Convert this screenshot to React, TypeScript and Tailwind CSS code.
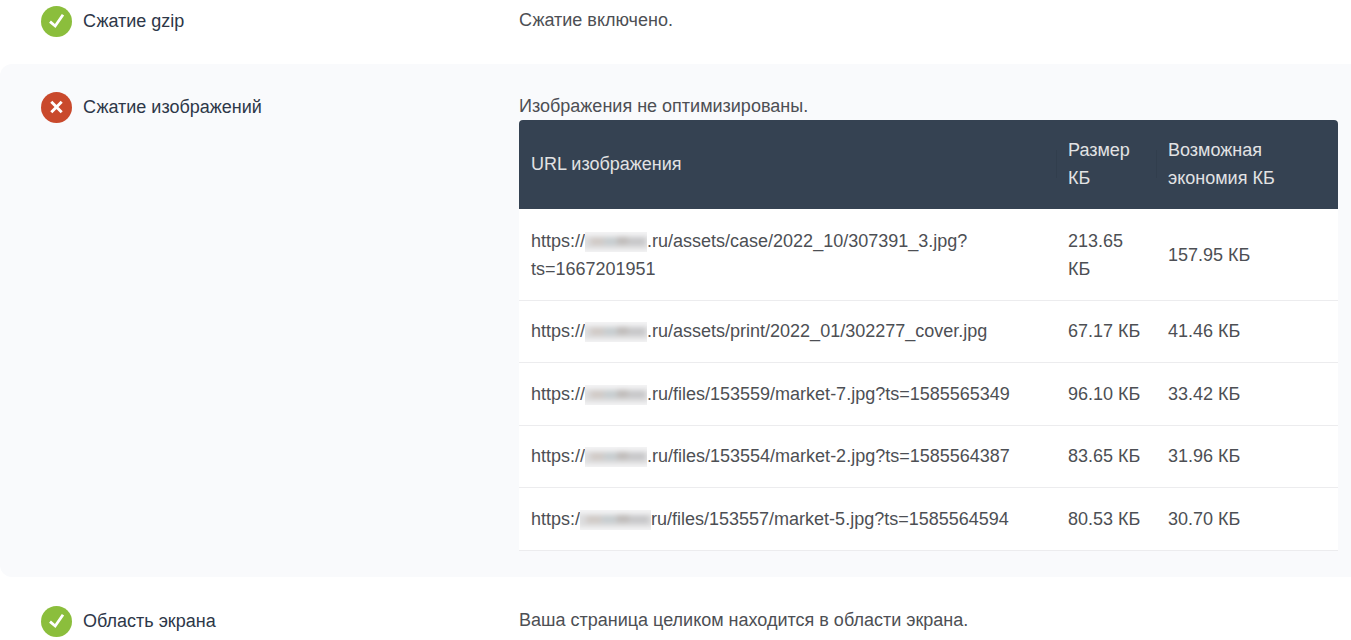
import type { ReactNode } from "react";

const images = [
  {
    scheme: "https://",
    mask: "w-[62px]",
    path: ".ru/assets/case/2022_10/307391_3.jpg?ts=1667201951",
    size: "213.65 КБ",
    saving: "157.95 КБ",
  },
  {
    scheme: "https://",
    mask: "w-[62px]",
    path: ".ru/assets/print/2022_01/302277_cover.jpg",
    size: "67.17 КБ",
    saving: "41.46 КБ",
  },
  {
    scheme: "https://",
    mask: "w-[62px]",
    path: ".ru/files/153559/market-7.jpg?ts=1585565349",
    size: "96.10 КБ",
    saving: "33.42 КБ",
  },
  {
    scheme: "https://",
    mask: "w-[62px]",
    path: ".ru/files/153554/market-2.jpg?ts=1585564387",
    size: "83.65 КБ",
    saving: "31.96 КБ",
  },
  {
    scheme: "https:/",
    mask: "w-[71px]",
    path: "ru/files/153557/market-5.jpg?ts=1585564594",
    size: "80.53 КБ",
    saving: "30.70 КБ",
  },
];

function StatusIcon({ ok }: { ok: boolean }) {
  return (
    <svg viewBox="0 0 31 31" className="size-[31px] shrink-0" aria-hidden="true">
      <circle cx="15.5" cy="15.5" r="15.5" fill={ok ? "#8bbe3c" : "#c9492c"} />
      <path
        d={ok ? "M9 15.6 L14.2 20 L22 8.8" : "M10.3 9.8 L20.7 20.2 M20.7 9.8 L10.3 20.2"}
        fill="none"
        stroke="#fff"
        strokeWidth={ok ? 2.8 : 2.9}
      />
    </svg>
  );
}

// Blurred host name inside a URL
function HiddenHost({ width }: { width: string }) {
  return (
    <svg
      viewBox="0 0 66 20"
      preserveAspectRatio="none"
      className={`inline-block h-5 ${width}`}
      aria-hidden="true"
    >
      <defs>
        <filter id="soften" x="-10%" y="-40%" width="120%" height="180%">
          <feGaussianBlur stdDeviation="2.6" />
        </filter>
      </defs>
      <rect width="66" height="20" fill="#f4f4f5" />
      <g filter="url(#soften)">
        <rect x="-2" y="4" width="70" height="13" fill="#dcdcdd" />
        <rect x="6" y="6" width="14" height="7" fill="#d0c9c5" />
        <rect x="20" y="6" width="14" height="7" fill="#c6cccf" />
        <rect x="34" y="5" width="12" height="8" fill="#c0bcba" />
        <rect x="46" y="6" width="18" height="7" fill="#c6c6c8" />
      </g>
    </svg>
  );
}

function NumberHeading({ children }: { children: ReactNode }) {
  return (
    <div className="flex items-center gap-[11px] pr-3">
      <span className="h-7 w-px shrink-0 bg-[#313e4d]" />
      <span>{children}</span>
    </div>
  );
}

function CheckRow({
  title,
  ok,
  className,
  children,
}: {
  title: string;
  ok: boolean;
  className: string;
  children: ReactNode;
}) {
  return (
    <section className={`grid grid-cols-[478px_1fr] pr-[13px] pl-[41px] ${className}`}>
      <div className="flex items-start gap-[11px]">
        <StatusIcon ok={ok} />
        <h2 className="leading-[30px] text-[#2d3748]">{title}</h2>
      </div>
      <div>{children}</div>
    </section>
  );
}

export default function App() {
  return (
    <main className="bg-white font-['Liberation_Sans',Arial,sans-serif] text-[18px] leading-7 text-[#4d4f54]">
      <CheckRow title="Сжатие gzip" ok className="pt-1.5 pb-[27px]">
        <p>Сжатие включено.</p>
      </CheckRow>

      <CheckRow
        title="Сжатие изображений"
        ok={false}
        className="rounded-l-xl bg-[#f9fafc] pt-7 pb-[26px]"
      >
        <p>Изображения не оптимизированы.</p>
        <table className="w-full table-fixed border-separate border-spacing-0 bg-white text-left">
          <thead className="text-[#e2e2e4] *:*:bg-[#354252] *:*:pt-4 *:*:pb-[17px] *:*:font-normal">
            <tr>
              <th className="rounded-tl-sm px-3">URL изображения</th>
              <th className="w-[100px]">
                <NumberHeading>Размер КБ</NumberHeading>
              </th>
              <th className="w-[182px] rounded-tr-sm">
                <NumberHeading>Возможная экономия КБ</NumberHeading>
              </th>
            </tr>
          </thead>
          <tbody>
            {images.map((image) => (
              <tr
                key={image.path}
                className="*:border-b *:border-[#ececee] *:px-3 *:pt-[17px] *:pb-[17px] even:*:pt-4 first:*:pt-[18px]"
              >
                <td>
                  {image.scheme}
                  <HiddenHost width={image.mask} />
                  {image.path}
                </td>
                <td>{image.size}</td>
                <td>{image.saving}</td>
              </tr>
            ))}
          </tbody>
        </table>
      </CheckRow>

      <CheckRow title="Область экрана" ok className="pt-[29px]">
        <p>Ваша страница целиком находится в области экрана.</p>
      </CheckRow>
    </main>
  );
}
